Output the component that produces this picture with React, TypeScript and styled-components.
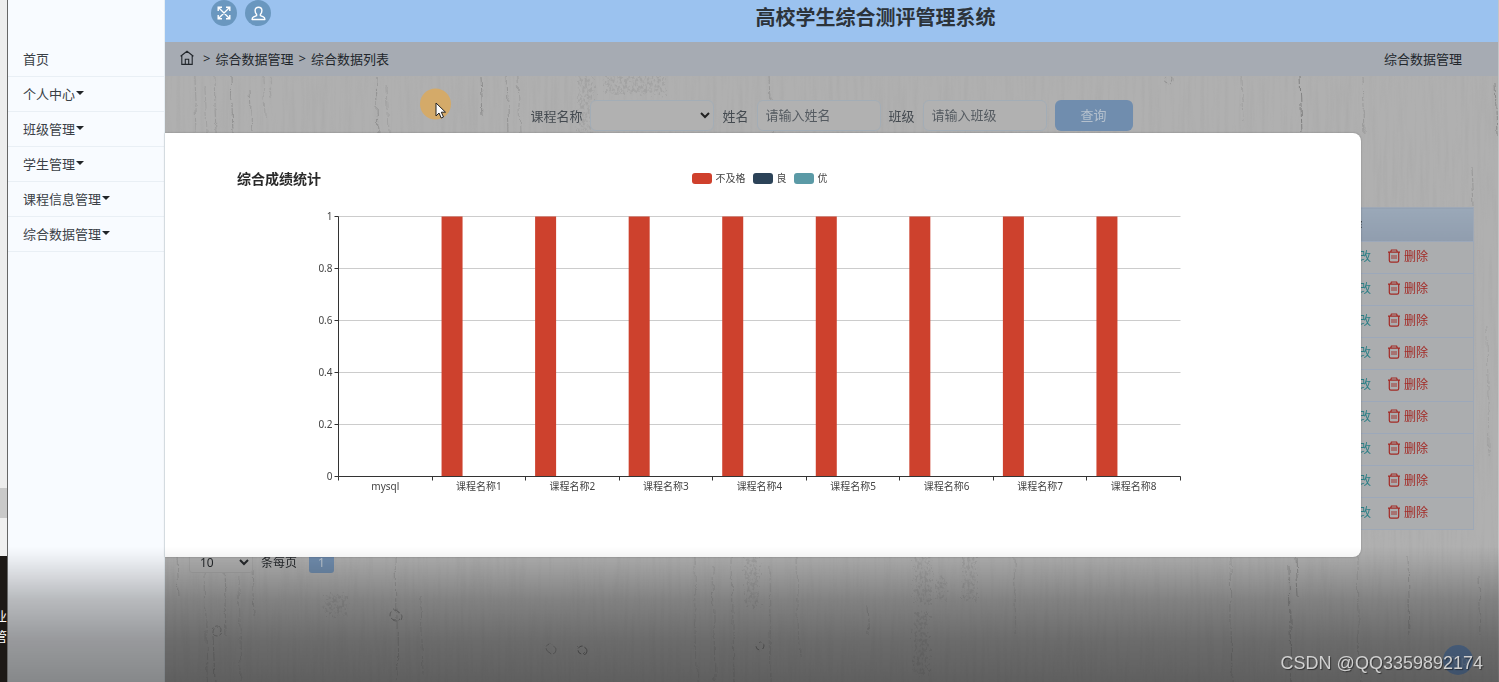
import React from "react";
import styled, { createGlobalStyle } from "styled-components";

const GlobalStyle = createGlobalStyle`
  * { box-sizing: border-box; }
  body {
    margin: 0;
    font-family: "Noto Sans", "Noto Sans CJK SC", sans-serif;
    font-size: 13px;
    color: #3a4046;
  }
  button, input, select { font: inherit; color: inherit; }
`;

const Page = styled.div`
  position: relative;
  display: flex;
  min-height: 100vh;
  overflow: hidden;
`;

const DesktopStrip = styled.div`
  flex: none;
  width: 8px;
  display: flex;
  flex-direction: column;
  border-right: 1px solid #666;
  background: #ededed;
`;

const StripPart = styled.div<{ $grow: number; $tone: string }>`
  flex: ${(p) => p.$grow} 0 0;
  background: ${(p) => p.$tone};
`;

const StripDesktop = styled(StripPart)`
  display: flex;
  flex-direction: column;
  align-items: flex-end;
  min-height: 0;
  overflow: hidden;
  color: #fff;
  line-height: 20px;

  span:first-child { margin-top: 50px; }
`;

const Sidebar = styled.nav`
  flex: none;
  width: 157px;
  padding-top: 42px;
  background: #f8fbff;
  border-right: 1px solid #e6eef4;
`;

const MenuLink = styled.a`
  display: flex;
  align-items: center;
  gap: 1px;
  height: 35px;
  padding: 0 0 2px 15px;
  border-bottom: 1px solid #e9eff5;
  color: #3a4046;
  text-decoration: none;
`;

const Caret = styled.span`
  border: 4px solid transparent;
  border-top-color: #212529;
  border-bottom: 0;
`;

const Main = styled.div`
  position: relative;
  flex: 1;
  min-width: 0;
  display: flex;
  flex-direction: column;
  background: #b0b0b0;
  border-right: 1px solid #c4c4c4;
`;

const Header = styled.header`
  position: relative;
  display: flex;
  align-items: flex-start;
  height: 42px;
  padding: 0 18px 0 46px;
  background: #9bc2ef;
`;

const RoundButtons = styled.div`
  display: flex;
  gap: 8px;
`;

const RoundButton = styled.button`
  display: grid;
  place-items: center;
  width: 26px;
  height: 26px;
  padding: 0;
  border: 0;
  border-radius: 50%;
  background: #6a97bf;
  color: #fff;
`;

const SystemTitle = styled.h1`
  flex: 1;
  margin: 0;
  text-align: center;
  font-size: 20px;
  line-height: 36px;
  font-weight: 700;
  color: #2c333a;
`;

const Breadcrumb = styled.div`
  position: relative;
  display: flex;
  align-items: center;
  gap: 5px;
  height: 34px;
  padding: 0 36px 2px 15px;
  background: #a6abb3;
  color: #21262b;

  a { color: inherit; text-decoration: none; }
`;

const HomeLink = styled.a`
  display: flex;
  margin-right: 4px;
`;

const PageName = styled.span`
  margin-left: auto;
`;

const Body = styled.div`
  position: relative;
  flex: 1;
`;

const Content = styled.main`
  position: relative;
  padding: 24px;
`;

const Texture = styled.svg`
  position: absolute;
  inset: 0;
  width: 100%;
  height: 100%;
`;

const SearchForm = styled.form`
  display: flex;
  justify-content: center;
  align-items: center;
  gap: 8px;
  color: #444a50;
`;

const control = `
  width: 124px;
  height: 31px;
  padding: 0 8px 2px;
  border: 1px solid #a3adb6;
  border-radius: 6px;
  background: #b1b1b1;
  color: #222;
`;

const Field = styled.input`
  ${control}
  &::placeholder { color: #555b61; opacity: 1; }
`;

const CourseSelect = styled.select`
  ${control}
  padding: 0 2px;
`;

const QueryButton = styled.button`
  width: 78px;
  height: 31px;
  padding: 0 0 2px;
  border: 0;
  border-radius: 6px;
  background: #708dae;
  color: #b4c0cd;
`;

const DataTable = styled.table`
  width: 100%;
  margin-top: 76px;
  border-collapse: collapse;
  border: 1px solid #9ea8b6;
  font-size: 12px;
  text-align: right;

  th {
    height: 34px;
    padding: 0 111px 0 0;
    background: linear-gradient(#9aa8b8, #909dae);
    color: #15191d;
  }
  td {
    height: 32px;
    padding: 0 45px 3px 0;
    border-top: 1px solid #9ca8ba;
    background: #abadaf;
  }
`;

const Actions = styled.div`
  display: flex;
  justify-content: flex-end;
  gap: 17px;
`;

const RowLink = styled.a<{ $tone: string }>`
  display: flex;
  align-items: center;
  gap: 4px;
  color: ${(p) => p.$tone};
  text-decoration: none;
`;

const Pagination = styled.div`
  display: flex;
  align-items: center;
  gap: 8px;
  margin-top: 21px;
  font-size: 12px;
  color: #26292c;
`;

const SizeSelect = styled.select`
  width: 64px;
  height: 22px;
  padding: 0 6px;
  border: 1px solid #a6a6a6;
  border-radius: 3px;
  background: #b0b0b0;
`;

const PageButton = styled.button`
  width: 25px;
  height: 22px;
  margin-left: 4px;
  padding: 0;
  border: 0;
  border-radius: 3px;
  background: #708dae;
  color: #bcc6d2;
`;

const Dialog = styled.section`
  position: absolute;
  top: 133px;
  left: 0;
  right: 137px;
  padding: 36px 0 52px;
  border-radius: 0 8px 8px 0;
  background: #fff;
  box-shadow: 0 0 2px rgba(0, 0, 0, 0.3);
`;

const ChartHead = styled.div`
  display: grid;
  grid-template-columns: 1fr auto 1fr;
  align-items: center;
  height: 20px;
  padding: 0 79px 0 72px;
`;

const ChartTitle = styled.h2`
  margin: 0;
  font-size: 14px;
  line-height: 20px;
  color: #2a2a2a;
`;

const Legend = styled.div`
  display: flex;
  align-items: center;
  gap: 7px;
  padding-bottom: 2px;
  font-size: 10px;
  line-height: 14px;
  color: #444;
`;

const LegendItem = styled.span<{ $tone: string }>`
  display: flex;
  align-items: center;
  gap: 4px;

  &::before {
    content: "";
    width: 20px;
    height: 11px;
    border-radius: 3px;
    background: ${(p) => p.$tone};
  }
`;

const ChartArea = styled.svg`
  display: block;
  width: 100%;
  height: auto;
  margin-top: 16px;
  font-size: 10px;
`;

const TopButton = styled.button`
  position: absolute;
  right: 25px;
  bottom: 7px;
  width: 30px;
  height: 30px;
  padding: 0;
  border: 0;
  border-radius: 50%;
  background: #7194c2;
  color: #8fa9cb;
  font-size: 12px;
`;

const BottomShade = styled.div`
  position: absolute;
  left: 8px;
  right: 0;
  bottom: 0;
  height: 135px;
  pointer-events: none;
  background: linear-gradient(
    rgba(0, 0, 0, 0),
    rgba(0, 0, 0, 0.06) 10%,
    rgba(0, 0, 0, 0.26) 39%,
    rgba(0, 0, 0, 0.39) 69%,
    rgba(0, 0, 0, 0.46)
  );
`;

const Watermark = styled.div`
  position: absolute;
  right: 16px;
  bottom: 8px;
  font-family: "Liberation Sans", sans-serif;
  font-size: 18px;
  line-height: 22px;
  color: #d0d0d0;
  text-shadow: 1px 1px 1px rgba(0, 0, 0, 0.5);
`;

const Pointer = styled.svg`
  position: absolute;
  top: 88px;
  left: 420px;
  width: 32px;
  height: 32px;
`;

const menu = [
  { label: "首页", nested: false },
  { label: "个人中心", nested: true },
  { label: "班级管理", nested: true },
  { label: "学生管理", nested: true },
  { label: "课程信息管理", nested: true },
  { label: "综合数据管理", nested: true },
];

const ExpandIcon = () => (
  <svg width="14" height="14" viewBox="0 0 14 14" fill="none" stroke="currentColor" strokeWidth="1.4">
    <path d="M1.5 1.5 12.5 12.5M12.5 1.5 1.5 12.5M1.2 5V1.2H5M9 1.2h3.8V5M12.8 9v3.8H9M5 12.8H1.2V9" />
  </svg>
);

const UserIcon = () => (
  <svg width="15" height="15" viewBox="0 0 15 15" fill="none" stroke="currentColor" strokeWidth="1.4" strokeLinejoin="round">
    <path d="M5.6 8.4C4.4 7.4 4.1 6 4.1 4.6 4.1 2.5 5.5 1.2 7.5 1.2s3.4 1.3 3.4 3.4c0 1.4-.3 2.8-1.5 3.8v1.3l3 1.1c1.1.4 1.5 1.1 1.5 2.7H1.1c0-1.6.4-2.3 1.5-2.7l3-1.1z" />
  </svg>
);

const HomeIcon = () => (
  <svg width="14" height="16" viewBox="0 0 14 16" fill="none" stroke="currentColor" strokeWidth="1.1">
    <path d="M.6 6.3 7 1.2l6.4 5.1M1.8 5.5v8.9h10.400V5.500M5.300 14.400V9.200h3.400v5.200" />
  </svg>
);

const TrashIcon = () => (
  <svg width="12" height="14" viewBox="0 0 12 14" fill="none" stroke="currentColor" strokeWidth="1.2">
    <path d="M0 3.100h12M2.600 3 3.400 1h5.200l.8 2M1.300 3.100v8.400q0 1.600 1.600 1.600h6.200q1.600 0 1.600-1.600V3.100" />
    <path d="M4 6v4M6 6v4M8 6v4" strokeWidth="0.900" />
  </svg>
);

// Painted wood: wavering grain, peeled patches and a few knots.
const grain: [number, number, number, number][] = [
  [30, 0, 58, 0.14], [40, 10, 58, 0.12], [49, 0, 58, 0.15], [66, 0, 58, 0.25], [85, 14, 58, 0.2],
  [98, 0, 40, 0.12], [105, 0, 24, 0.1], [211, 0, 58, 0.25], [222, 10, 58, 0.12], [315, 0, 40, 0.3],
  [342, 0, 58, 0.22], [353, 0, 58, 0.14], [605, 0, 56, 0.2], [1076, 0, 45, 0.12], [1135, 0, 58, 0.4],
  [1197, 0, 58, 0.18], [1331, 8, 60, 0.3], [1306, 90, 130, 0.2], [1322, 250, 380, 0.1],
  [12, 480, 520, 0.18], [40, 494, 606, 0.12], [48, 560, 606, 0.2], [59, 490, 560, 0.16],
  [74, 500, 606, 0.1], [87, 490, 540, 0.14], [231, 480, 606, 0.18], [256, 520, 600, 0.12],
  [530, 480, 606, 0.1], [548, 490, 606, 0.12], [567, 480, 606, 0.12], [604, 490, 606, 0.1],
  [632, 480, 580, 0.1], [702, 530, 560, 0.14], [849, 480, 560, 0.1], [1065, 480, 606, 0.14],
  [1124, 490, 606, 0.26], [1130, 480, 520, 0.3], [1193, 480, 606, 0.12], [1242, 480, 560, 0.2], [1314, 500, 560, 0.16],
];
const peeled: [number, number, number, number][] = [
  [413, 0, 16, 58], [440, 0, 60, 18], [580, 480, 14, 50], [749, 480, 17, 48],
  [749, 536, 15, 62], [771, 500, 10, 24], [798, 480, 14, 45], [160, 518, 22, 22],
];
const knots: [number, number, number, number][] = [
  [52, 555, 5, 0.3], [231, 540, 5, 0.4], [385, 572, 4, 0.3],
  [417, 574, 4, 0.5], [595, 570, 4, 0.45], [1004, 4, 4, 0.25],
];

const WoodTexture = () => (
  <Texture viewBox="0 0 1333 606" preserveAspectRatio="none" aria-hidden="true">
    <defs>
      <filter id="fibres" x="0" y="0" width="100%" height="100%">
        <feTurbulence type="fractalNoise" baseFrequency="0.25 0.015" numOctaves="3" seed="4" />
        <feColorMatrix values="0 0 0 0 0.3  0 0 0 0 0.3  0 0 0 0 0.3  0.9 0 0 0 -0.38" />
      </filter>
      <filter id="rough" x="-5%" y="-5%" width="110%" height="110%">
        <feTurbulence type="fractalNoise" baseFrequency="0.08 0.06" numOctaves="3" seed="7" result="n" />
        <feDisplacementMap in="SourceGraphic" in2="n" scale="7" />
      </filter>
      <filter id="flakes" x="-20%" y="-20%" width="140%" height="140%">
        <feTurbulence type="fractalNoise" baseFrequency="0.4 0.3" numOctaves="2" seed="3" result="n" />
        <feDisplacementMap in="SourceGraphic" in2="n" scale="14" result="shape" />
        <feColorMatrix in="n" values="0 0 0 0 0.2  0 0 0 0 0.2  0 0 0 0 0.2  5 0 0 0 -2.2" result="specks" />
        <feComposite in="specks" in2="shape" operator="in" />
      </filter>
    </defs>
    <rect width="1333" height="606" filter="url(#fibres)" opacity="0.4" />
    <g filter="url(#flakes)" opacity="0.22">
      {peeled.map(([x, y, w, h]) => (
        <rect key={`${x}-${y}`} x={x} y={y} width={w} height={h} />
      ))}
    </g>
    <g filter="url(#rough)" fill="none" stroke="#3c3c3c">
      {grain.map(([x, y1, y2, o]) => (
        <path key={`${x}-${y1}`} d={`M${x} ${y1}L${x + 2} ${y2}`} opacity={o} strokeDasharray="9 2 4 1" />
      ))}
      {knots.map(([x, y, r, o]) => (
        <circle key={`${x}-${y}`} cx={x} cy={y} r={r} opacity={o} strokeDasharray="5 2" />
      ))}
    </g>
  </Texture>
);

const courses = ["mysql", ...Array.from({ length: 8 }, (_, i) => `课程名称${i + 1}`)];
const failing = [0, 1, 1, 1, 1, 1, 1, 1, 1];
const axis = { left: 173.5, right: 1015.5, top: 11.5, bottom: 271.5 };
const band = (axis.right - axis.left) / courses.length;

const BarChart = () => (
  <ChartArea viewBox="0 0 1196 300" role="img" aria-label="综合成绩统计">
    {[0, 0.2, 0.4, 0.6, 0.8, 1].map((v) => {
      const y = axis.bottom - Math.round(v * (axis.bottom - axis.top));
      return (
        <g key={v}>
          <line x1={axis.left} x2={axis.right} y1={y} y2={y} stroke="#ccc" />
          <line x1={axis.left - 4} x2={axis.left} y1={y} y2={y} stroke="#333" />
          <text x={axis.left - 6} y={y + 3} textAnchor="end" fill="#444">{v}</text>
        </g>
      );
    })}
    {courses.map((name, i) => {
      const x = axis.left + i * band;
      const h = failing[i] * (axis.bottom - axis.top);
      return (
        <g key={name}>
          <rect x={x + 9.5} y={axis.bottom - h} width="21" height={h} fill="#cd412d" />
          <line x1={Math.floor(x) + 0.5} x2={Math.floor(x) + 0.5} y1={axis.bottom} y2={axis.bottom + 4} stroke="#333" />
          <text x={x + band / 2} y={axis.bottom + 13} textAnchor="middle" fill="#444">{name}</text>
        </g>
      );
    })}
    <path
      d={`M${axis.left} ${axis.top}V${axis.bottom}H${axis.right}v4`}
      fill="none"
      stroke="#333"
    />
  </ChartArea>
);

const ContentArea = () => (
  <Body>
    <WoodTexture />
    <Content>
      <SearchForm>
        <label htmlFor="course">课程名称</label>
        <CourseSelect id="course" />
        <label htmlFor="name">姓名</label>
        <Field id="name" placeholder="请输入姓名" />
        <label htmlFor="class">班级</label>
        <Field id="class" placeholder="请输入班级" />
        <QueryButton type="button">查询</QueryButton>
      </SearchForm>
      <DataTable>
        <thead>
          <tr><th scope="col">操作</th></tr>
        </thead>
        <tbody>
          {Array.from({ length: 9 }, (_, i) => (
            <tr key={i}>
              <td>
                <Actions>
                  <RowLink href="#" $tone="#2c7f86">修改</RowLink>
                  <RowLink href="#" $tone="#a32a25"><TrashIcon />删除</RowLink>
                </Actions>
              </td>
            </tr>
          ))}
        </tbody>
      </DataTable>
      <Pagination>
        <SizeSelect id="size"><option>10</option></SizeSelect>
        <label htmlFor="size">条每页</label>
        <PageButton>1</PageButton>
      </Pagination>
    </Content>
  </Body>
);

export default function App() {
  return (
    <Page>
      <GlobalStyle />
      <DesktopStrip>
        <StripPart $grow={488} $tone="#ededed" />
        <StripPart $grow={30} $tone="#c9c9c9" />
        <StripPart $grow={38} $tone="#f0f0f0" />
        <StripDesktop $grow={126} $tone="#1d1916">
          <span>业</span>
          <span>管</span>
        </StripDesktop>
      </DesktopStrip>
      <Sidebar>
        {menu.map((item) => (
          <MenuLink key={item.label} href="#">
            {item.label}
            {item.nested && <Caret />}
          </MenuLink>
        ))}
      </Sidebar>
      <Main>
        <Header>
          <RoundButtons>
            <RoundButton aria-label="全屏"><ExpandIcon /></RoundButton>
            <RoundButton aria-label="用户"><UserIcon /></RoundButton>
          </RoundButtons>
          <SystemTitle>高校学生综合测评管理系统</SystemTitle>
        </Header>
        <Breadcrumb>
          <HomeLink href="#" aria-label="首页"><HomeIcon /></HomeLink>
          <span>&gt;</span>
          <a href="#">综合数据管理</a>
          <span>&gt;</span>
          <a href="#">综合数据列表</a>
          <PageName>综合数据管理</PageName>
        </Breadcrumb>
        <ContentArea />
        <Dialog>
          <ChartHead>
            <ChartTitle>综合成绩统计</ChartTitle>
            <Legend>
              <LegendItem $tone="#cf402c">不及格</LegendItem>
              <LegendItem $tone="#2c4358">良</LegendItem>
              <LegendItem $tone="#5b9aa6">优</LegendItem>
            </Legend>
          </ChartHead>
          <BarChart />
        </Dialog>
        <TopButton>Top</TopButton>
      </Main>
      <BottomShade />
      <Watermark>CSDN @QQ3359892174</Watermark>
      <Pointer viewBox="0 0 32 32" aria-hidden="true">
        <circle cx="15.5" cy="16" r="15.5" fill="#d4aa69" />
        <path d="M16 15v13l3-3 2.2 5 2.3-1-2.2-4.800h4.200z" fill="#fff" stroke="#222" />
      </Pointer>
    </Page>
  );
}
